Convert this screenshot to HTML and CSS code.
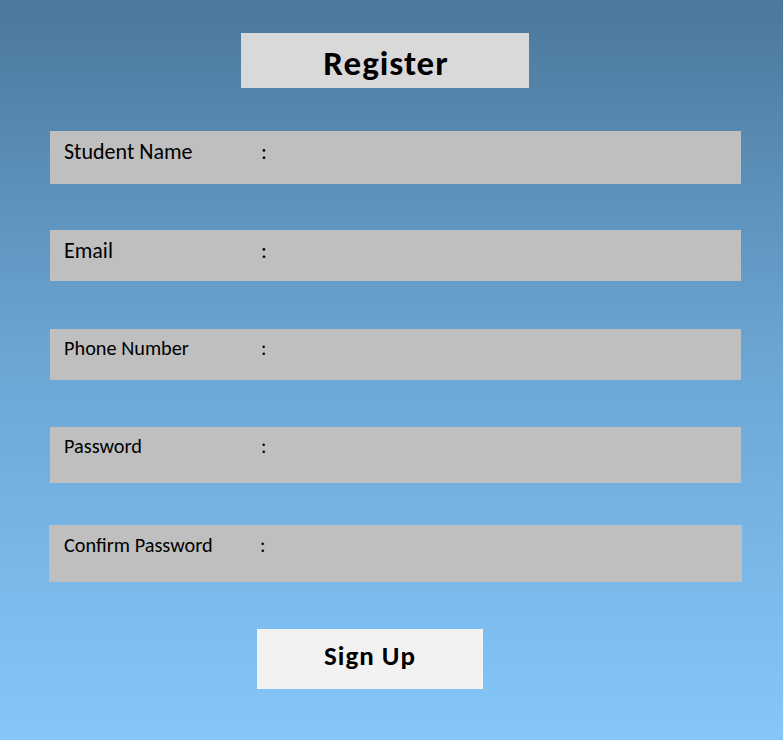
FILE: index.html
```html
<!DOCTYPE html>
<html>
<head>
<meta charset="utf-8">
<link rel="stylesheet" href="styles.css">
</head>
<body>
<div class="page">
  <div class="title">Register</div>
  <div class="form">
    <div class="row r1"><span class="label">Student Name</span><span class="colon">:</span></div>
    <div class="row r2"><span class="label">Email</span><span class="colon">:</span></div>
    <div class="row r3"><span class="label">Phone Number</span><span class="colon">:</span></div>
    <div class="row r4"><span class="label">Password</span><span class="colon">:</span></div>
    <div class="row r5"><span class="label">Confirm Password</span><span class="colon">:</span></div>
  </div>
  <div class="btn">Sign Up</div>
</div>
</body>
</html>
```
FILE: styles.css
```css
html, body {
  margin: 0;
  padding: 0;
}
body {
  width: 783px;
  height: 740px;
  overflow: hidden;
  background: linear-gradient(to bottom, #4b789b 0%, #6aa3d0 45%, #85c7fb 100%);
  font-family: Calibri, Carlito, "Open Sans", sans-serif;
  color: #000;
}
.page {
  padding-top: 33px;
  display: flex;
  flex-direction: column;
}
.title {
  margin-left: 241px;
  width: 288px;
  height: 55px;
  background: #d9d9d9;
  box-sizing: border-box;
  text-align: center;
  font-weight: bold;
  font-size: 35px;
  line-height: 35px;
  letter-spacing: 1px;
  padding-top: 13px;
  padding-left: 2px;
}
.form {
  display: flex;
  flex-direction: column;
  margin-top: 43px;
}
.row {
  margin-left: 50px;
  width: 691px;
  background: #bfbfbf;
  display: flex;
  box-sizing: border-box;
  padding-left: 14px;
  font-size: 20.3px;
  line-height: 20.3px;
}
.label {
  width: 197px;
}
.r1 { height: 53px; padding-top: 9.5px; font-size: 22px; line-height: 22px; }
.r2 { height: 51px; margin-top: 46px; padding-top: 10px; font-size: 22px; line-height: 22px; }
.r3 { height: 51px; margin-top: 48px; padding-top: 8.5px; }
.r4 { height: 56px; margin-top: 47px; padding-top: 8.8px; }
.r5 { height: 57px; margin-top: 42px; padding-top: 9.5px; margin-left: 49px; width: 693px; padding-left: 15px; }
.r5 .label { width: 196px; }
.btn {
  margin-top: 47px;
  margin-left: 257px;
  width: 226px;
  height: 60px;
  background: #f2f2f2;
  box-sizing: border-box;
  text-align: center;
  font-weight: bold;
  font-size: 27px;
  line-height: 27px;
  letter-spacing: 1px;
  padding-top: 13px;
}
```
